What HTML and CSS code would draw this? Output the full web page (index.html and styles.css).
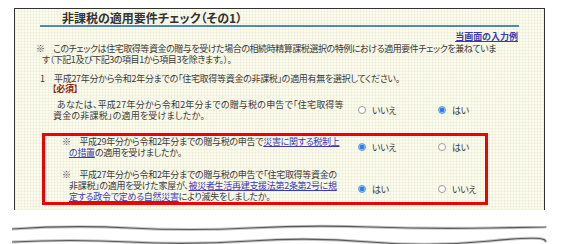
FILE: index.html
```html
<!DOCTYPE html>
<html lang="ja">
<head>
    <meta charset="UTF-8">
    <meta name="viewport" content="width=device-width, initial-scale=1.0">
    <title>非課税の適用要件チェック</title>
    <link rel="stylesheet" href="styles.css">
</head>
<body>
    <div class="panel">
        <h1 class="title">非課税の適用要件チェック（その1）</h1>
        <div class="example"><a href="#">当画面の入力例</a></div>
        <p class="note">※　このチェックは住宅取得等資金の贈与を受けた場合の相続時精算課税選択の特例における適用要件チェックを兼ねていま<br>す（下記1及び下記3の項目1から項目3を除きます。）。</p>

        <p class="item-head"><span class="num">1</span>平成27年分から令和2年分までの「住宅取得等資金の非課税」の適用有無を選択してください。</p>
        <p class="required">【必須】</p>

        <div class="q">
            <p class="q-text indent">あなたは、平成27年分から令和2年分までの贈与税の申告で「住宅取得等<br>資金の非課税」の適用を受けましたか。</p>
            <label class="opt"><input type="radio" name="q1">いいえ</label>
            <label class="opt"><input type="radio" name="q1" checked>はい</label>
        </div>

        <!-- highlighted part -->
        <div class="highlight">
            <div class="q">
                <p class="q-text hang">※　平成29年分から令和2年分までの贈与税の申告で<a href="#">災害に関する税制上<br>の措置</a>の適用を受けましたか。</p>
                <label class="opt"><input type="radio" name="q2" checked>いいえ</label>
                <label class="opt"><input type="radio" name="q2">はい</label>
            </div>
            <div class="q q-last">
                <p class="q-text hang">※　平成27年分から令和2年分までの贈与税の申告で「住宅取得等資金の<br>非課税」の適用を受けた家屋が、<a href="#">被災者生活再建支援法第2条第2号に規<br>定する政令で定める自然災害</a>により滅失をしましたか。</p>
                <label class="opt opt-low"><input type="radio" name="q3" checked>はい</label>
                <label class="opt opt-low"><input type="radio" name="q3">いいえ</label>
            </div>
        </div>
    </div>

    <div class="cut">
        <svg width="561" height="30" viewBox="0 0 561 30">
            <path class="wave-shadow" d="M12 7 Q 70 3 130 6 T 250 6 T 370 5 T 490 6 T 545 5" />
            <path class="wave" d="M12 7 Q 70 3 130 6 T 250 6 T 370 5 T 490 6 T 545 5" />
            <path class="wave-shadow" d="M12 20 Q 70 17 130 20 T 250 19 T 370 20 T 490 19 T 545 20" />
            <path class="wave" d="M12 20 Q 70 17 130 20 T 250 19 T 370 20 T 490 19 T 545 20" />
        </svg>
    </div>
</body>
</html>
```

FILE: styles.css
```css
* {
    margin: 0;
    padding: 0;
    box-sizing: border-box;
}
body {
    background-color: #fff;
    font-family: "Noto Sans CJK JP", "Noto Sans", sans-serif;
    font-size: 9px;
    line-height: 11px;
    letter-spacing: -0.3px;
    color: #3a3a3a;
    font-feature-settings: "palt";
}
a {
    color: #3b3bb5;
    text-decoration: underline;
}
.panel {
    margin: 8px 0 0 14px;
    width: 531px;
    height: 202px;
    border: 1px solid #333;
    border-bottom: none;
    overflow: hidden;
    background-color: #fbfbee;
    background-image:
        repeating-linear-gradient(0deg, rgba(220, 220, 190, 0.25) 0 1px, transparent 1px 3px),
        repeating-linear-gradient(90deg, rgba(220, 220, 190, 0.25) 0 1px, transparent 1px 3px);
}
.title {
    margin: 1px 0 0 25px;
    width: 479px;
    padding-left: 22px;
    font-size: 12px;
    line-height: 15px;
    letter-spacing: 0;
    font-weight: bold;
    color: #333;
    border-bottom: 2px solid #4a8cb4;
}
.example {
    text-align: right;
    margin: 4px 26px 0 0;
    font-weight: bold;
    letter-spacing: 0;
}
.note {
    margin: 1px 0 0 27px;
    text-indent: -6px;
    white-space: nowrap;
    letter-spacing: -0.45px;
}
.item-head {
    margin: 8px 0 0 25px;
    white-space: nowrap;
}
.item-head .num {
    display: inline-block;
    width: 14px;
}
.required {
    margin-left: 37px;
    font-weight: bold;
    color: #8b2a10;
    line-height: 9px;
}
.q {
    display: grid;
    grid-template-columns: 303px 80px 80px;
    align-items: center;
    margin: 6px 0 0 38px;
}
.q-text {
    white-space: nowrap;
}
.indent {
    text-indent: 4px;
    letter-spacing: 0.2px;
}
.hang {
    padding-left: 7px;
    text-indent: -7px;
}
.opt {
    display: flex;
    align-items: center;
    gap: 6px;
    padding-left: 2px;
}
.opt-low {
    margin-top: 7px;
}
.opt input {
    appearance: none;
    width: 8px;
    height: 8px;
    border: 1px solid #9a9a9a;
    border-radius: 50%;
    background-color: #fff;
}
.opt input:checked {
    border-color: #5b9eea;
    background: radial-gradient(circle, #2f7fe0 0 2px, #8cbdf2 2.5px);
}
.highlight {
    margin: 12px 0 0 27px;
    width: 446px;
    border: 3px solid #f00000;
    padding: 0 0 0 17px;
}
.highlight .q {
    margin: 0;
    grid-template-columns: 294px 80px 50px;
}
.highlight .q-last {
    margin-top: 11px;
}
.cut {
    margin-top: 12px;
}
.cut svg {
    display: block;
}
.wave {
    fill: none;
    stroke: #5a5a5a;
    stroke-width: 1.2;
}
.wave-shadow {
    fill: none;
    stroke: #c8c8c8;
    stroke-width: 3;
}
```
